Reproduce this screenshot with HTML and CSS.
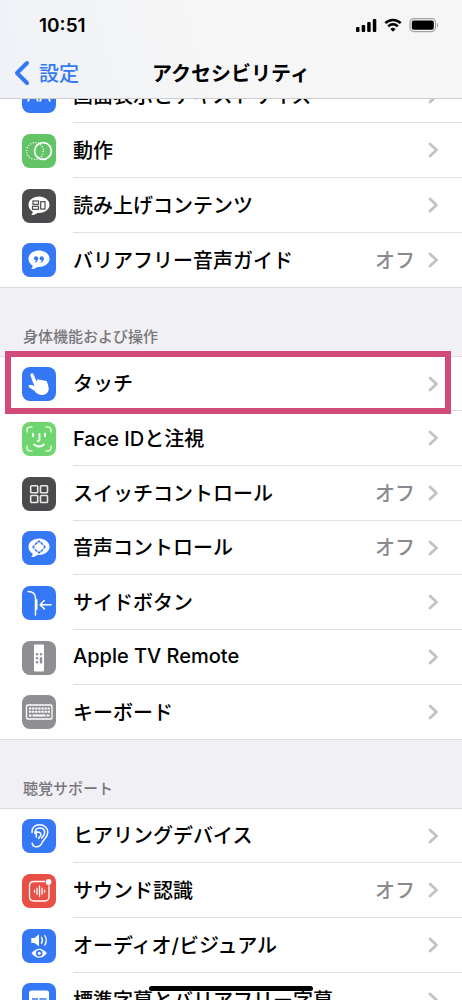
FILE: index.html
```html
<!DOCTYPE html>
<html lang="ja">
<head>
<meta charset="utf-8">
<meta name="viewport" content="width=device-width, initial-scale=1">
<title>アクセシビリティ</title>
<link rel="stylesheet" href="styles.css">
</head>
<body>
<svg class="sprite" aria-hidden="true">
  <symbol id="chevron" viewBox="0 0 12 18"><path d="M3 3l6.500 6L3 15" fill="none" stroke="currentColor" stroke-width="2.800" stroke-linecap="round" stroke-linejoin="round"/></symbol>
  <symbol id="bubble" viewBox="0 0 34 34"><path d="M17 7.500c-6 0-10.500 3.600-10.500 8.300 0 3 1.700 5.500 4.300 7-.2 1.300-.7 2.300-1.500 3.300 2.500-.1 4.700-1 6.200-2.200l1.500.1c6 0 10.500-3.600 10.500-8.200S23 7.500 17 7.500z" fill="#fff"/></symbol>
</svg>
<div class="screen">
  <header class="top">
    <div class="status">
      <time class="clock">10:51</time>
      <div class="signals">
        <svg width="22" height="16" viewBox="0 0 22 16" aria-label="電波"><rect x="1" y="10" width="3.500" height="5" rx="1"/><rect x="6.700" y="8" width="3.500" height="7" rx="1"/><rect x="12.200" y="5" width="3.500" height="10" rx="1"/><rect x="17.800" y="2" width="3.500" height="13" rx="1"/></svg>
        <svg width="18" height="16" viewBox="0 0 18 16" aria-label="Wi-Fi"><g fill="none" stroke="#000" stroke-width="2.500"><path d="M1.300 6.200a11 11 0 0 1 15.400 0"/><path d="M4.200 9.300a6.800 6.800 0 0 1 9.600 0"/></g><path d="M9 14.800l-2.600-2.700a3.700 3.700 0 0 1 5.200 0z"/></svg>
        <svg width="30" height="16" viewBox="0 0 30 16" aria-label="バッテリー"><rect x="1" y="1.600" width="25.500" height="13" rx="4" fill="none" stroke="#a3a3a3" stroke-width="1.200"/><rect x="2.800" y="3.400" width="22" height="9.400" rx="2"/><path d="M28 6v4.400c1.300-.6 1.300-3.800 0-4.400z" fill="#999"/></svg>
      </div>
    </div>
    <nav class="nav">
      <a class="back" href="#"><svg width="16" height="26" viewBox="0 0 16 26" aria-hidden="true"><path d="M13 3L3 13l10 10" fill="none" stroke="currentColor" stroke-width="4" stroke-linecap="round" stroke-linejoin="round"/></svg>設定</a>
      <h1 class="title">アクセシビリティ</h1>
    </nav>
  </header>
  <main class="content">
    <ul class="list list-scrolled">
      <li class="item"><a class="row" href="#">
        <svg class="icon blue" viewBox="0 0 34 34"><path d="M6 22.500l5-14 5 14M8 18h6M18 22.500l5-14 5 14M20 18h6" fill="none" stroke="#fff" stroke-width="1.800"/></svg>
        <span class="cell"><span class="label">画面表示とテキストサイズ</span><svg class="chevron"><use href="#chevron"/></svg></span></a></li>
      <li class="item"><a class="row" href="#">
        <svg class="icon green" viewBox="0 0 34 34"><circle cx="13" cy="17" r="8.400" fill="none" stroke="#fff" stroke-width="1.400" stroke-dasharray="1 1.640"/><circle cx="21" cy="17" r="8.400" fill="none" stroke="#fff" stroke-width="1.700"/></svg>
        <span class="cell"><span class="label">動作</span><svg class="chevron"><use href="#chevron"/></svg></span></a></li>
      <li class="item"><a class="row" href="#">
        <svg class="icon dark" viewBox="0 0 34 34"><use href="#bubble"/><g fill="none" stroke="#4b4b4d" stroke-width="1.200"><rect x="11" y="12" width="5.500" height="3.300"/><rect x="10.500" y="17.300" width="6" height="3"/><rect x="18.700" y="12.700" width="4.300" height="7.300"/></g></svg>
        <span class="cell"><span class="label">読み上げコンテンツ</span><svg class="chevron"><use href="#chevron"/></svg></span></a></li>
      <li class="item"><a class="row" href="#">
        <svg class="icon blue" viewBox="0 0 34 34"><use href="#bubble"/><g fill="#3478f6"><circle cx="14" cy="15.300" r="2.100"/><circle cx="19.700" cy="15.300" r="2.100"/><path d="M16.100 15c.1 2.600-1 4-3 4.800l-.4-.8c1-.6 1.500-1.300 1.500-2.500zM21.800 15c.1 2.600-1 4-3 4.800l-.4-.8c1-.6 1.500-1.300 1.500-2.500z"/></g></svg>
        <span class="cell"><span class="label">バリアフリー音声ガイド</span><span class="value">オフ</span><svg class="chevron"><use href="#chevron"/></svg></span></a></li>
    </ul>

    <h2 class="heading">身体機能および操作</h2>
    <ul class="list">
      <li class="item marked"><a class="row" href="#">
        <svg class="icon blue" viewBox="0 0 34 34"><path d="M9.300 6.500c1-.5 1.900 0 2.300.9l3.100 7 .5-1.600c.9-1 2.200-.6 2.500.4.900-.9 2.200-.6 2.600.4.800-.8 2-.5 2.400.4.900-.6 2-.2 2.300.7.700 2.300 1.800 4.900 1.700 7.300-.1 3.800-3.300 6.200-7.100 6-3.300-.1-5.300-1.800-7.200-4.200l-5.300-3.600c-.8-.7-.6-2 .6-2.300 1.500-.3 3.200.7 4.700 1.600L8.600 8.700c-.4-.9-.2-1.800.7-2.200z" fill="#fff"/></svg>
        <span class="cell"><span class="label">タッチ</span><svg class="chevron"><use href="#chevron"/></svg></span></a></li>
      <li class="item"><a class="row" href="#">
        <svg class="icon lime" viewBox="0 0 34 34"><g fill="none" stroke="#fff" stroke-linecap="round" stroke-width="1.500"><path d="M5 10V8q0-3 3-3h2M24 5h2q3 0 3 3v2M29 24v2q0 3-3 3h-2M10 29H8q-3 0-3-3v-2" opacity=".75"/><path d="M11 11.700v2.600M23 11.700v2.600M17.500 12v5.500q0 1.500-1.700 1.500M12 22.500q5 4 10 0" stroke-width="1.800"/></g></svg>
        <span class="cell"><span class="label">Face IDと注視</span><svg class="chevron"><use href="#chevron"/></svg></span></a></li>
      <li class="item"><a class="row" href="#">
        <svg class="icon dark" viewBox="0 0 34 34"><g fill="none" stroke="#e8e8e8" stroke-width="1.600"><rect x="8.700" y="8.700" width="7" height="7" rx=".8"/><rect x="18.500" y="8.700" width="7" height="7" rx=".8"/><rect x="8.700" y="18.500" width="7" height="7" rx=".8"/><rect x="18.500" y="18.500" width="7" height="7" rx=".8"/></g></svg>
        <span class="cell"><span class="label">スイッチコントロール</span><span class="value">オフ</span><svg class="chevron"><use href="#chevron"/></svg></span></a></li>
      <li class="item"><a class="row" href="#">
        <svg class="icon blue" viewBox="0 0 34 34"><use href="#bubble"/><g fill="none" stroke="#3478f6" stroke-width="1.500"><path d="M13.200 13.800q.5-1.400 2-2M18.800 11.800q1.500.6 2 2M20.800 18.200q-.5 1.400-2 2M15.200 20.200q-1.500-.6-2-2"/></g><path d="M17 9l2.400 2.400h-4.800zM17 23l2.400-2.400h-4.800zM10 16l2.400-2.400v4.800zM24 16l-2.400-2.400v4.800z" fill="#3478f6"/></svg>
        <span class="cell"><span class="label">音声コントロール</span><span class="value">オフ</span><svg class="chevron"><use href="#chevron"/></svg></span></a></li>
      <li class="item"><a class="row" href="#">
        <svg class="icon blue" viewBox="0 0 34 34"><g fill="none" stroke="#fff" stroke-width="1.500" stroke-linecap="round" stroke-linejoin="round"><path d="M6 5.500c5 0 7.500 2.500 7.500 7V29"/><path d="M14.500 14v9" stroke-width="2"/><path d="M29 18.700H18.500M22.300 14.500l-4.200 4.200 4.200 4.200"/></g></svg>
        <span class="cell"><span class="label">サイドボタン</span><svg class="chevron"><use href="#chevron"/></svg></span></a></li>
      <li class="item"><a class="row" href="#">
        <svg class="icon gray" viewBox="0 0 34 34"><rect x="12" y="3.500" width="10" height="27" rx="1" fill="#fff"/><g fill="#8e8e93"><circle cx="15" cy="13.300" r="1.200"/><circle cx="19" cy="13.300" r="1.200"/><circle cx="15" cy="17.300" r="1.200"/><circle cx="15" cy="21.300" r="1.200"/><rect x="17.800" y="16" width="2.400" height="6.600" rx="1.200"/></g></svg>
        <span class="cell"><span class="label">Apple TV Remote</span><svg class="chevron"><use href="#chevron"/></svg></span></a></li>
      <li class="item"><a class="row" href="#">
        <svg class="icon gray" viewBox="0 0 34 34"><rect x="4.500" y="10" width="25.500" height="14" rx="1.200" fill="none" stroke="#fff" stroke-width="1.300"/><g fill="none" stroke="#fff" stroke-width="1.900"><path d="M7 13.500h21M7 16.800h21" stroke-dasharray="2.300 .8"/><path d="M7 20.500h2.500M10.500 20.500h13M24.500 20.500h3"/></g></svg>
        <span class="cell"><span class="label">キーボード</span><svg class="chevron"><use href="#chevron"/></svg></span></a></li>
    </ul>

    <h2 class="heading">聴覚サポート</h2>
    <ul class="list">
      <li class="item"><a class="row" href="#">
        <svg class="icon blue" viewBox="0 0 34 34"><g fill="none" stroke="#fff" stroke-width="1.500" stroke-linecap="round"><path d="M10 13.500C9.500 8.500 13 5.800 17.500 5.800c5 0 8.300 3.200 8.300 7.500 0 5-3.600 6.200-5.300 9.700-1.500 3.200-3 5-6 4.800-2.400-.1-4-1.500-4.300-3.500"/><path d="M13 14.300c-.5-3.300 1.500-5.300 4.500-5.300s5.200 1.800 5.200 4.600c0 2.500-1.700 3.500-3.200 5.400"/><path d="M13 14.300c3-2.300 6-.8 6 1.300 0 2-2.300 1.800-2.300 4M14.300 12.500v5.500"/></g></svg>
        <span class="cell"><span class="label">ヒアリングデバイス</span><svg class="chevron"><use href="#chevron"/></svg></span></a></li>
      <li class="item"><a class="row" href="#">
        <svg class="icon red" viewBox="0 0 34 34"><g fill="none" stroke="#fff" stroke-width="1.300" stroke-linecap="round"><path d="M22.500 7.500H12Q7.500 7.500 7.500 12v10.500Q7.500 27 12 27h10.500q4.500 0 4.500-4.500V12"/><path d="M12.500 16.200v2M15 14.200v6M17.500 12v10.500M20 14.200v6M22.500 16.200v2"/></g><circle cx="26.500" cy="8" r="2.900" fill="#fff"/></svg>
        <span class="cell"><span class="label">サウンド認識</span><span class="value">オフ</span><svg class="chevron"><use href="#chevron"/></svg></span></a></li>
      <li class="item"><a class="row" href="#">
        <svg class="icon blue" viewBox="0 0 34 34"><path d="M9.300 9h3.200L17 5.300v12L12.500 14H9.300z" fill="#fff"/><path d="M19.500 8.300q2 3 0 6M22.700 6.500q3.200 4.800 0 9.600" fill="none" stroke="#fff" stroke-width="1.300" stroke-linecap="round"/><path d="M9.500 24.300q7.700-9 15.400 0-7.700 9-15.400 0z" fill="#fff"/><circle cx="17.200" cy="24.300" r="3.300" fill="#3478f6"/><circle cx="17.200" cy="24.300" r="1.500" fill="#fff"/></svg>
        <span class="cell"><span class="label">オーディオ/ビジュアル</span><svg class="chevron"><use href="#chevron"/></svg></span></a></li>
      <li class="item"><a class="row" href="#">
        <svg class="icon blue" viewBox="0 0 34 34"><rect x="7" y="7.500" width="20" height="18" rx="2.500" fill="#fff"/><path d="M10 16h6M17.500 16h7M10 19.500h9M20.500 19.500h4" stroke="#3478f6" stroke-width="1.300"/></svg>
        <span class="cell"><span class="label">標準字幕とバリアフリー字幕</span><svg class="chevron"><use href="#chevron"/></svg></span></a></li>
    </ul>
  </main>
  <div class="home-bar"></div>
</div>
</body>
</html>
```

FILE: styles.css
```css
* {
  box-sizing: border-box;
}

body {
  margin: 0;
  background: #f0f0f5;
  color: #000;
  font-family: Inter, "Noto Sans CJK JP", sans-serif;
  font-size: 20px;
  font-weight: 500;
}

a {
  color: inherit;
  text-decoration: none;
}

.sprite {
  position: absolute;
  width: 0;
  height: 0;
}

.screen {
  position: relative;
  display: flex;
  flex-direction: column;
  height: 100vh;
  overflow: hidden;
}

.top {
  position: relative;
  z-index: 1;
  flex: none;
  background: linear-gradient(75deg, #eff2f7, #f6f6f6 45%);
  border-bottom: 1px solid #cdcdcf;
}

.status {
  display: flex;
  align-items: center;
  justify-content: space-between;
  height: 50px;
  padding: 0 23px 0 39px;
}

.clock {
  font-size: 19px;
  font-weight: 600;
}

.signals {
  display: flex;
  gap: 7px;
}

.nav {
  display: grid;
  grid-template-columns: 1fr auto 1fr;
  align-items: center;
  height: 48px;
  padding: 0 14px 3px;
}

.back {
  display: flex;
  align-items: center;
  gap: 9px;
  color: #3478f6;
}

.title {
  margin: 0;
  font-size: 20px;
  font-weight: 700;
}

.list {
  margin: 0;
  padding: 0;
  list-style: none;
  background: #fff;
  border-bottom: 1px solid #dcdce0;
}

.list-scrolled {
  margin-top: -30px;
}

.item {
  position: relative;
  height: 55px;
}

.item:nth-child(3n + 1) {
  height: 54px;
}

.row {
  display: flex;
  gap: 17px;
  align-items: center;
  height: 100%;
  padding-left: 22px;
}

.cell {
  display: flex;
  flex: 1;
  align-items: center;
  align-self: stretch;
  padding-right: 23px;
  border-bottom: 1px solid #e0e0e2;
}

.item:last-child .cell {
  border-bottom: 0;
}

.label,
.value {
  padding-bottom: 2px;
}

.label {
  flex: 1;
  white-space: nowrap;
}

.value {
  margin-right: 12px;
  color: #8a8a8e;
}

.chevron {
  width: 12px;
  height: 18px;
  color: #c2c2c5;
}

.icon {
  flex: none;
  width: 34px;
  height: 34px;
  border-radius: 8px;
}

.blue {
  background: #3478f6;
}

.green {
  background: #62c466;
}

.lime {
  background: #6fd66f;
}

.dark {
  background: #4b4b4d;
}

.gray {
  background: #8e8e93;
}

.red {
  background: #e84f45;
}

.heading {
  display: flex;
  align-items: flex-end;
  height: 69px;
  margin: 0;
  padding: 0 23px 8px;
  color: #77777b;
  border-bottom: 1px solid #dcdce0;
  font-size: 15px;
  font-weight: 500;
  line-height: 22px;
}

.marked::after {
  position: absolute;
  inset: -6px 11px -3px 5px;
  z-index: 1;
  border: 6px solid #d14a7a;
  content: "";
  pointer-events: none;
}

.home-bar {
  position: absolute;
  bottom: 9px;
  left: 50%;
  width: 164px;
  height: 5px;
  border-radius: 3px;
  background: #000;
  transform: translateX(-50%);
}
```
